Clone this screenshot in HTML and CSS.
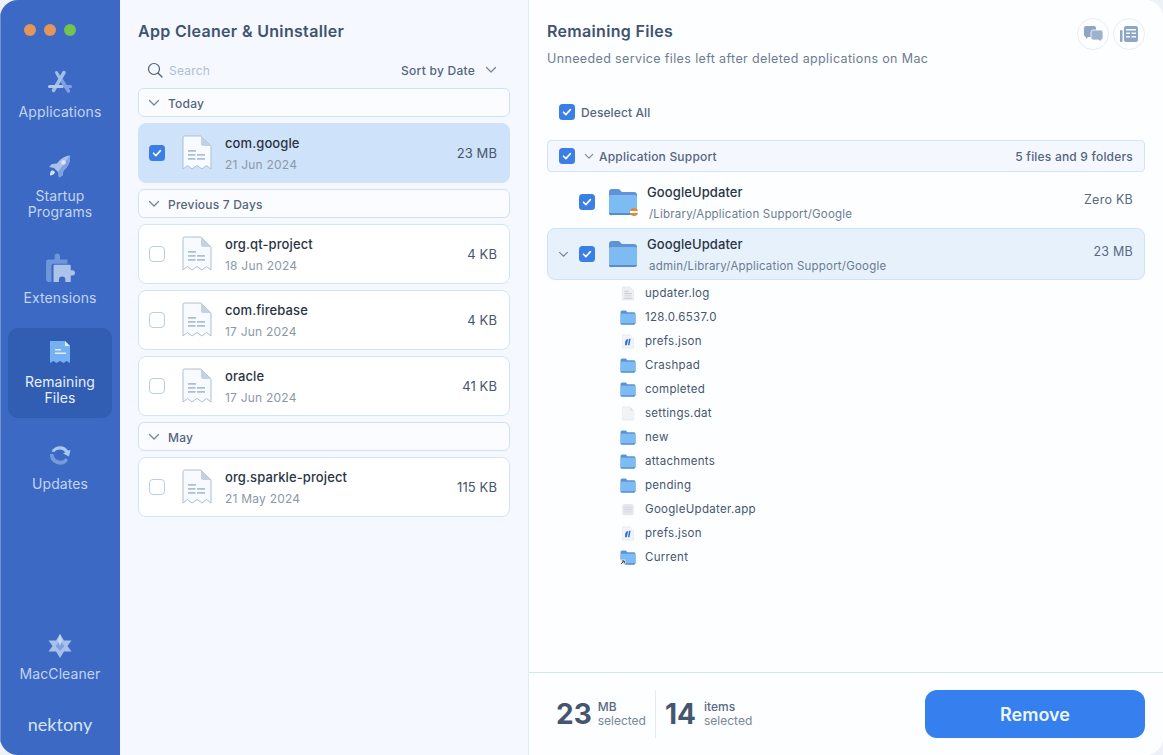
FILE: index.html
```html
<!DOCTYPE html>
<html lang="en">
<head>
    <meta charset="UTF-8">
    <title>App Cleaner &amp; Uninstaller</title>
    <link rel="stylesheet" href="styles.css">
</head>
<body>
<svg class="defs" width="0" height="0">
    <symbol id="doc" viewBox="0 0 30 36">
        <path d="M1 2.500a1.500 1.500 0 0 1 1.500-1.500H19l10 10v23l-4.500-3.500-4.500 3.500-5-3.500-5 3.500-4.500-3.500L1 34V2.500z" fill="#f7faff" stroke="#aebfd4" stroke-width="1"/>
        <path d="M19 1v8a2 2 0 0 0 2 2h8z" fill="#c3d1e2"/>
        <path d="M6 15h8v1.700H6zM6 19h7.500v1.700H6zM15 19h8v1.700h-8zM6 23h7.500v1.700H6zM15 23h8v1.700h-8z" fill="#aebfd4"/>
    </symbol>
    <symbol id="folder" viewBox="0 0 30 28">
        <path d="M1 4a3 3 0 0 1 3-3h7l3 3h12a3 3 0 0 1 3 3v17a3 3 0 0 1-3 3H4a3 3 0 0 1-3-3z" fill="#5f93d6"/>
        <path d="M1 9a2 2 0 0 1 2-2h24a2 2 0 0 1 2 2v15a3 3 0 0 1-3 3H4a3 3 0 0 1-3-3z" fill="#7cbcf3"/>
        <path d="M1 25a2 2 0 0 0 3 2h22a3 3 0 0 0 3-2z" fill="#5a8bc9"/>
    </symbol>
    <symbol id="alias" viewBox="0 0 30 28">
        <use href="#folder"/>
        <rect x="0" y="18" width="10" height="10" fill="#f2f4f7"/>
        <path d="M2 26l5-5M3.500 20.500H8V25" fill="none" stroke="#2a3038" stroke-width="1.800"/>
    </symbol>
    <symbol id="check" viewBox="0 0 16 16">
        <rect width="16" height="16" rx="3.500" fill="#3a7fe6"/>
        <path d="M4.500 8.200l2.400 2.400 4.500-5" fill="none" stroke="#fff" stroke-width="1.600" stroke-linecap="round" stroke-linejoin="round"/>
    </symbol>
    <symbol id="chev" viewBox="0 0 12 8">
        <path d="M1.500 1.500L6 6l4.500-4.500" fill="none" stroke="#75859b" stroke-width="1.300" stroke-linecap="round" stroke-linejoin="round"/>
    </symbol>
    <symbol id="json" viewBox="0 0 14 16">
        <path d="M1 1h8l4 4v10H1z" fill="#f1f4f8" stroke="#e1e6ed" stroke-width=".6"/>
        <path d="M4 8l1.500-2.500h1.600L5.800 12H3.800zM8 5h1.800L8.600 12H7z" fill="#2f74dc"/>
    </symbol>
    <symbol id="blank" viewBox="0 0 14 16">
        <path d="M1 1h8l4 4v10H1z" fill="#f1f3f6" stroke="#e3e7ec" stroke-width=".6"/>
        <path d="M9 1v4h4z" fill="#dde2e8"/>
    </symbol>
    <symbol id="log" viewBox="0 0 14 16">
        <path d="M1 1h8l4 4v10H1z" fill="#eef0f3" stroke="#dfe3e8" stroke-width=".6"/>
        <path d="M3 5h5v1H3zM3 7.500h8v1H3zM3 10h8v1H3zM3 12.500h8v1H3z" fill="#c3c9d1"/>
    </symbol>
    <symbol id="appfile" viewBox="0 0 16 16">
        <rect x="2" y="2" width="12" height="12" rx="2" fill="#e4e7ec"/>
        <path d="M4 5h8v1H4zM4 7.500h8v1H4zM4 10h8v1H4z" fill="#d2d7de"/>
    </symbol>
</svg>

<div class="window">
    <aside class="sidebar">
        <div class="lights">
            <span class="light orange"></span>
            <span class="light orange"></span>
            <span class="light green"></span>
        </div>
        <nav class="nav">
            <a class="nav-item">
                <svg class="nav-icon" viewBox="0 0 24 24" fill="none" stroke-linecap="round">
                    <path d="M12.500 8.500L20.500 21" stroke="#7ea2df" stroke-width="3.500"/>
                    <path d="M17 16.500h5.500" stroke="#7ea2df" stroke-width="3"/>
                    <path d="M16 2.500L5.500 20.500" stroke="#a3bde8" stroke-width="3.500"/>
                    <path d="M8.500 2.500l2.500 4.500" stroke="#a3bde8" stroke-width="3"/>
                    <path d="M1.500 16.500H14" stroke="#b3c9ec" stroke-width="3"/>
                </svg>
                <span>Applications</span>
            </a>
            <a class="nav-item tall">
                <svg class="nav-icon" viewBox="0 0 24 24">
                    <path d="M22 1.500c.5 6-1.500 11-6.500 15l-1 5-3.500 2-1-5.500-4-4L1 13l3-3 5-.500C12 5 17 2 22 1.500z" fill="#a9c1ea"/>
                    <path d="M22 1.500c.5 6-1.500 11-6.500 15l-1 5-3.500 2-1-5.500z" fill="#7ea2df"/>
                    <circle cx="15.500" cy="8.500" r="2.200" fill="#dbe6f7"/>
                    <path d="M3 17c2-1 3.500 0 4 1.500-1 2-3 3-5 3 0-2 .3-3.500 1-4.500z" fill="#d5e1f5"/>
                </svg>
                <span>Startup<br>Programs</span>
            </a>
            <a class="nav-item">
                <svg class="nav-icon big" viewBox="0 0 28 28">
                    <path d="M1 8a2 2 0 0 1 2-2h6V3a2.500 2.500 0 0 1 5 0v3h7v4H8a2 2 0 0 0-2 2v15H3a2 2 0 0 1-2-2z" fill="#6d97da"/>
                    <path d="M8 12a1 1 0 0 1 1-1h14a1 1 0 0 1 1 1v4h1.500a2.500 2.500 0 0 1 0 5H24v6h-5v-2a3 3 0 0 0-6 0v2H8z" fill="#adc4ea"/>
                </svg>
                <span>Extensions</span>
            </a>
            <a class="nav-item tall active">
                <svg class="nav-icon" viewBox="0 0 24 24">
                    <path d="M2 1h15l5 5v17l-3.500-2-3 2-3.500-2-3.500 2-3-2L2 23z" fill="#74b0f2"/>
                    <path d="M17 1v5h5z" fill="#e3edf9"/>
                    <path d="M7 9h6v1.500H7zM7 12.500h11V14H7z" fill="#e3edf9"/>
                </svg>
                <span>Remaining<br>Files</span>
            </a>
            <a class="nav-item">
                <svg class="nav-icon" viewBox="0 0 24 24">
                    <path d="M3.500 9.500A9.500 9.500 0 0 1 20 8.500l2.500-.500-1.500 6.500-6-3 2.200-1A6.500 6.500 0 0 0 6.500 10z" fill="#a9c8f0"/>
                    <path d="M2 12a10 10 0 0 0 18 6.500L18 16a7 7 0 0 1-12.500-4z" fill="#769bdc"/>
                </svg>
                <span>Updates</span>
            </a>
        </nav>
        <div class="sidebar-bottom">
            <a class="nav-item cleaner">
                <svg class="nav-icon" viewBox="0 0 24 24">
                    <path d="M12 0l4 6.500h7.500L19.500 12l4 5.500H16L12 24l-4-6.500H.5L4.500 12 .5 6.500H8z" fill="#a9c1ea"/>
                    <path d="M12 7l4.500 5-4.500 5-4.500-5z" fill="#7ea2df"/>
                    <path d="M12 0l2 6.500-2 5.500-2-5.500z" fill="#c7d7f2"/>
                </svg>
                <span>MacCleaner</span>
            </a>
            <div class="brand">nektony</div>
        </div>
    </aside>

    <section class="list-panel">
        <h1 class="title">App Cleaner &amp; Uninstaller</h1>
        <div class="search-row">
            <svg class="search-icon" viewBox="0 0 16 16">
                <circle cx="7" cy="7" r="5.500" fill="none" stroke="#4b5d77" stroke-width="1.200"/>
                <path d="M11 11l4 4" stroke="#4b5d77" stroke-width="1.200" stroke-linecap="round"/>
            </svg>
            <span class="search-text">Search</span>
            <span class="sort">Sort by Date</span>
            <svg class="chev sort-chev"><use href="#chev"/></svg>
        </div>

        <div class="group-head"><svg class="chev"><use href="#chev"/></svg>Today</div>
        <div class="app-row selected">
            <svg class="box"><use href="#check"/></svg>
            <svg class="doc"><use href="#doc"/></svg>
            <div class="app-info"><div class="app-name">com.google</div><div class="app-date">21 Jun 2024</div></div>
            <div class="app-size">23 MB</div>
        </div>

        <div class="group-head"><svg class="chev"><use href="#chev"/></svg>Previous 7 Days</div>
        <div class="app-row">
            <span class="box empty"></span>
            <svg class="doc"><use href="#doc"/></svg>
            <div class="app-info"><div class="app-name">org.qt-project</div><div class="app-date">18 Jun 2024</div></div>
            <div class="app-size">4 KB</div>
        </div>
        <div class="app-row">
            <span class="box empty"></span>
            <svg class="doc"><use href="#doc"/></svg>
            <div class="app-info"><div class="app-name">com.firebase</div><div class="app-date">17 Jun 2024</div></div>
            <div class="app-size">4 KB</div>
        </div>
        <div class="app-row">
            <span class="box empty"></span>
            <svg class="doc"><use href="#doc"/></svg>
            <div class="app-info"><div class="app-name">oracle</div><div class="app-date">17 Jun 2024</div></div>
            <div class="app-size">41 KB</div>
        </div>

        <div class="group-head"><svg class="chev"><use href="#chev"/></svg>May</div>
        <div class="app-row">
            <span class="box empty"></span>
            <svg class="doc"><use href="#doc"/></svg>
            <div class="app-info"><div class="app-name">org.sparkle-project</div><div class="app-date">21 May 2024</div></div>
            <div class="app-size">115 KB</div>
        </div>
    </section>

    <section class="detail-panel">
        <header class="detail-head">
            <div>
                <h2 class="title">Remaining Files</h2>
                <p class="subtitle">Unneeded service files left after deleted applications on Mac</p>
            </div>
            <div class="head-buttons">
                <span class="round-btn">
                    <svg viewBox="0 0 20 16" width="20" height="16">
                        <path d="M1 2a2 2 0 0 1 2-2h8a2 2 0 0 1 2 2v7a2 2 0 0 1-2 2H5l-2 2v-2a2 2 0 0 1-2-2z" fill="#8ea6c6"/>
                        <path d="M8 6a2 2 0 0 1 2-2h8a2 2 0 0 1 2 2v6a2 2 0 0 1-2 2v2l-2.500-2H10a2 2 0 0 1-2-2z" fill="#9db2cf" stroke="#fff" stroke-width=".8"/>
                    </svg>
                </span>
                <span class="round-btn">
                    <svg viewBox="0 0 18 16" width="18" height="16">
                        <rect x="4" y="0" width="14" height="16" rx="2" fill="#8ea6c6"/>
                        <rect x="0" y="4" width="2.500" height="12" rx="1" fill="#8ea6c6"/>
                        <path d="M6 3h10v1.500H6zM6 6.500h4v1.500H6zM11.500 6.500H16v1.500h-4.500zM6 10h4v1.500H6zM11.500 10H16v1.500h-4.500z" fill="#f5f8fd"/>
                    </svg>
                </span>
            </div>
        </header>

        <label class="select-all"><svg class="box"><use href="#check"/></svg>Deselect All</label>

        <div class="tree">
            <div class="tree-group">
                <svg class="box"><use href="#check"/></svg>
                <svg class="chev"><use href="#chev"/></svg>
                <span class="tree-group-name">Application Support</span>
                <span class="tree-group-count">5 files and 9 folders</span>
            </div>
            <div class="folder-row">
                <svg class="box"><use href="#check"/></svg>
                <span class="folder-wrap">
                    <svg class="folder"><use href="#folder"/></svg>
                    <span class="minus-badge"></span>
                </span>
                <div class="folder-info"><div class="folder-name">GoogleUpdater</div><div class="folder-path">/Library/Application Support/Google</div></div>
                <div class="folder-size">Zero KB</div>
            </div>
            <div class="folder-row open">
                <svg class="chev"><use href="#chev"/></svg>
                <svg class="box"><use href="#check"/></svg>
                <span class="folder-wrap"><svg class="folder"><use href="#folder"/></svg></span>
                <div class="folder-info"><div class="folder-name">GoogleUpdater</div><div class="folder-path">admin/Library/Application Support/Google</div></div>
                <div class="folder-size">23 MB</div>
            </div>
            <ul class="files">
                <li><svg class="file-icon"><use href="#log"/></svg>updater.log</li>
                <li><svg class="file-icon"><use href="#folder"/></svg>128.0.6537.0</li>
                <li><svg class="file-icon"><use href="#json"/></svg>prefs.json</li>
                <li><svg class="file-icon"><use href="#folder"/></svg>Crashpad</li>
                <li><svg class="file-icon"><use href="#folder"/></svg>completed</li>
                <li><svg class="file-icon"><use href="#blank"/></svg>settings.dat</li>
                <li><svg class="file-icon"><use href="#folder"/></svg>new</li>
                <li><svg class="file-icon"><use href="#folder"/></svg>attachments</li>
                <li><svg class="file-icon"><use href="#folder"/></svg>pending</li>
                <li><svg class="file-icon"><use href="#appfile"/></svg>GoogleUpdater.app</li>
                <li><svg class="file-icon"><use href="#json"/></svg>prefs.json</li>
                <li><svg class="file-icon"><use href="#alias"/></svg>Current</li>
            </ul>
        </div>

        <footer class="detail-foot">
            <div class="stat">
                <span class="stat-num">23</span>
                <span class="stat-label"><b>MB</b><br>selected</span>
            </div>
            <div class="stat second">
                <span class="stat-num">14</span>
                <span class="stat-label"><b>items</b><br>selected</span>
            </div>
            <button class="remove">Remove</button>
        </footer>
    </section>
</div>
</body>
</html>
```

FILE: styles.css
```css
*{
    padding: 0;
    margin: 0;
    box-sizing: border-box;
}
html,body{
    height: 100%;
    background: #eef2f8;
    overflow: hidden;
}
body{
    font-family: Inter, "Liberation Sans", sans-serif;
    color: #46566e;
}
ul,li{
    list-style: none;
}
.defs{
    display: block;
    height: 0;
}
.window{
    width: 1163px;
    height: 755px;
    display: flex;
    border-radius: 18px;
    overflow: hidden;
    background: #fff;
}

/* sidebar */
.sidebar{
    width: 120px;
    flex: none;
    background: #3b69c3;
    border-left: 1px solid #6f93d6;
    display: flex;
    flex-direction: column;
    padding: 24px 8px 0 7px;
}
.lights{
    display: flex;
    gap: 8px;
    padding-left: 16px;
}
.light{
    width: 12px;
    height: 12px;
    border-radius: 50%;
}
.light.orange{
    background: #e3955a;
}
.light.green{
    background: #74c250;
}
.nav{
    margin-top: 22px;
    display: flex;
    flex-direction: column;
    gap: 10px;
}
.nav-item{
    display: flex;
    flex-direction: column;
    align-items: center;
    padding: 12px 0;
    font-size: 14px;
    line-height: 16px;
    color: #c3d4f1;
    text-align: center;
    border-radius: 10px;
    letter-spacing: .1px;
}
.nav-item.tall{
    margin-bottom: 2px;
}
.nav-icon{
    width: 24px;
    height: 24px;
    margin-bottom: 10px;
}
.nav-icon.big{
    width: 30px;
    height: 30px;
    margin: -3px 0 7px;
}
.nav-item.active{
    background: #315eb2;
    color: #e8effb;
}
.sidebar-bottom{
    margin-top: auto;
    display: flex;
    flex-direction: column;
    align-items: center;
}
.nav-item.cleaner{
    padding: 0;
}
.nav-item.cleaner .nav-icon{
    margin-bottom: 8px;
}
.brand{
    margin: 32px 0 21px;
    font-family: Lato, sans-serif;
    font-size: 18px;
    line-height: 20px;
    color: #d6e2f6;
}

/* app list */
.list-panel{
    width: 409px;
    flex: none;
    background: #f5f8ff;
    border-right: 1px solid #e2ecf9;
    padding: 0 18px;
    display: flex;
    flex-direction: column;
}
.title{
    font-size: 16px;
    line-height: 20px;
    font-weight: 600;
    color: #40536f;
    letter-spacing: .32px;
}
.list-panel .title{
    margin-top: 21px;
}
.search-row{
    display: flex;
    align-items: center;
    height: 24px;
    margin-top: 17px;
    padding: 0 13px 0 9px;
    font-size: 12px;
}
.search-icon{
    width: 16px;
    height: 16px;
    margin-right: 6px;
}
.search-text{
    color: #aebfd6;
    letter-spacing: .2px;
}
.sort{
    margin-left: auto;
    font-weight: 500;
    color: #55657e;
    letter-spacing: .25px;
}
.chev{
    width: 12px;
    height: 8px;
    flex: none;
}
.sort-chev{
    margin-left: 10px;
}
.group-head{
    height: 29px;
    margin-top: 6px;
    display: flex;
    align-items: center;
    gap: 8px;
    padding: 1px 0 0 9px;
    font-size: 12px;
    font-weight: 500;
    color: #55657e;
    letter-spacing: .2px;
    background: #fbfcff;
    border: 1px solid #cfe1f8;
    border-radius: 6px;
}
.app-row{
    height: 60px;
    margin-top: 6px;
    display: flex;
    align-items: center;
    padding: 0 12px 0 10px;
    background: #fff;
    border: 1px solid #d3e4f8;
    border-radius: 8px;
}
.app-row.selected{
    background: #cee2fa;
    border-color: #cee2fa;
}
.group-head + .app-row{
    margin-top: 5.500px;
}
.app-row + .group-head{
    margin-top: 6.500px;
}
.box{
    width: 16px;
    height: 16px;
    flex: none;
    display: block;
}
.box.empty{
    background: #fff;
    border: 1px solid #b9cde8;
    border-radius: 4px;
}
.doc{
    width: 30px;
    height: 36px;
    flex: none;
    margin-left: 17px;
}
.app-info{
    margin: 2px 0 0 13px;
    flex: 1;
}
.app-name{
    font-size: 13px;
    line-height: 18px;
    font-weight: 500;
    color: #2a3445;
    letter-spacing: .1px;
}
.app-date{
    margin-top: 5px;
    font-size: 12px;
    line-height: 16px;
    color: #8c98a9;
    letter-spacing: .22px;
}
.app-size{
    font-size: 13px;
    color: #46566e;
    letter-spacing: .1px;
}

/* detail */
.detail-panel{
    flex: 1;
    min-width: 0;
    display: flex;
    flex-direction: column;
    background: #fdfeff;
}
.detail-head{
    display: flex;
    justify-content: space-between;
    padding: 21px 18px 0;
}
.subtitle{
    margin-top: 9px;
    font-size: 12.500px;
    line-height: 18px;
    color: #6d7c91;
    letter-spacing: .37px;
}
.head-buttons{
    display: flex;
    gap: 4px;
    margin-top: -3px;
}
.round-btn{
    width: 32px;
    height: 32px;
    border-radius: 50%;
    border: 1px solid #e3edf9;
    display: flex;
    align-items: center;
    justify-content: center;
}
.select-all{
    display: flex;
    align-items: center;
    gap: 6px;
    margin: 34px 0 0 30px;
    height: 20px;
    font-size: 12px;
    font-weight: 500;
    color: #55657e;
    letter-spacing: .1px;
}
.tree{
    flex: 1;
    margin: 18px 18px 0;
}
.tree-group{
    height: 32px;
    display: flex;
    align-items: center;
    padding: 0 11px;
    background: #f4f8fe;
    border: 1px solid #d3e4f8;
    border-radius: 4px;
    font-size: 12px;
    font-weight: 500;
    color: #55657e;
}
.tree-group .chev{
    width: 10px;
    height: 7px;
    margin: 0 5px 0 9px;
}
.tree-group-name{
    letter-spacing: .2px;
}
.tree-group-count{
    margin-left: auto;
    letter-spacing: .2px;
}
.folder-row{
    height: 52px;
    margin-top: 4px;
    display: flex;
    align-items: center;
    padding: 0 11px 0 31px;
    border: 1px solid transparent;
}
.folder-row.open{
    margin-top: 0;
    padding-left: 10px;
    background: #e6f1fc;
    border-color: #cfe2f8;
    border-radius: 8px;
}
.folder-row.open .chev{
    margin-right: 10px;
    width: 11px;
    height: 7px;
}
.folder-wrap{
    width: 30px;
    height: 28px;
    margin-left: 13px;
    position: relative;
    flex: none;
}
.folder{
    width: 30px;
    height: 28px;
    display: block;
}
.minus-badge{
    position: absolute;
    right: 0;
    bottom: 0;
    width: 8px;
    height: 8px;
    border-radius: 50%;
    background: linear-gradient(#e08a3c 0 38%, #fff 38% 62%, #e08a3c 62%);
}
.folder-info{
    flex: 1;
    margin-left: 9px;
}
.folder-name{
    font-size: 13px;
    line-height: 18px;
    font-weight: 500;
    color: #2a3445;
    letter-spacing: .1px;
}
.folder-path{
    margin: 5px 0 0 2px;
    font-size: 11.500px;
    line-height: 16px;
    color: #6d7c91;
    letter-spacing: .2px;
}
.folder-size{
    margin-bottom: 6px;
    font-size: 12.500px;
    color: #5a697f;
    letter-spacing: .25px;
}
.files{
    margin-top: 1px;
    padding-left: 73px;
}
.files li{
    height: 24px;
    display: flex;
    align-items: center;
    gap: 9px;
    font-size: 11.500px;
    color: #46566e;
    letter-spacing: .3px;
}
.file-icon{
    width: 16px;
    height: 15px;
    flex: none;
}
.detail-foot{
    height: 83px;
    flex: none;
    display: flex;
    align-items: center;
    padding: 0 18px 0 27px;
    border-top: 1px solid #d3e4f8;
}
.stat{
    display: flex;
    align-items: center;
    gap: 6px;
    height: 48px;
}
.stat.second{
    gap: 8px;
    margin-left: 9px;
    padding-left: 9px;
    border-left: 1px solid #e2ecf9;
}
.stat-num{
    font-size: 28px;
    font-weight: 700;
    color: #46566e;
}
.stat-label{
    font-size: 12px;
    line-height: 14px;
    color: #7a8797;
}
.stat-label b{
    font-weight: 500;
    color: #5a697f;
}
.remove{
    margin-left: auto;
    width: 220px;
    height: 48px;
    border: none;
    border-radius: 12px;
    background: #357fee;
    color: #eef5ff;
    font-family: inherit;
    font-size: 18px;
    font-weight: 600;
}
```
